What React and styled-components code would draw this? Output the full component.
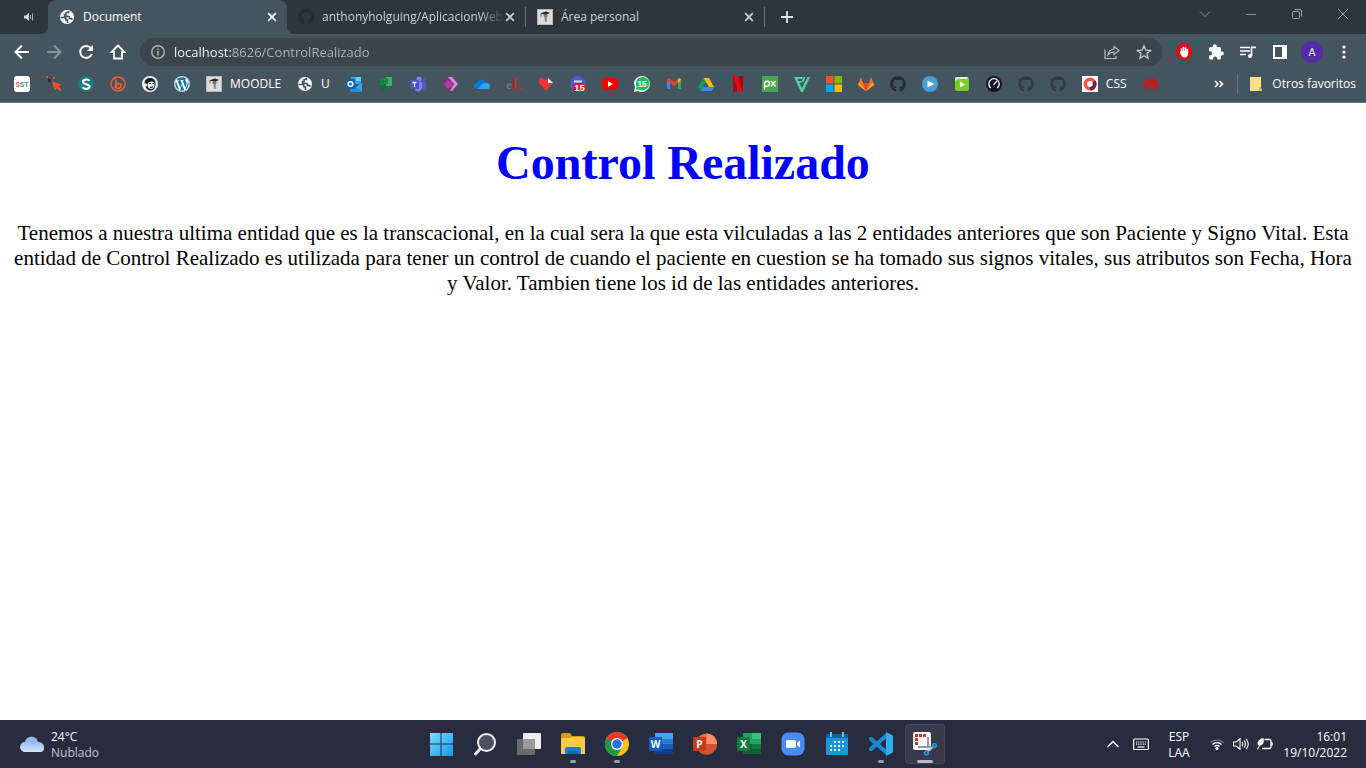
import React from "react";
import styled, { createGlobalStyle } from "styled-components";
import { FaGithub, FaWordpress, FaMailchimp } from "react-icons/fa";
import { SiHuawei } from "react-icons/si";

const Global = createGlobalStyle`
  *, *::before, *::after { box-sizing: border-box; }
  body { margin: 0; background: #fff; }
  button, input { font: inherit; color: inherit; border: 0; padding: 0; background: none; }
  a { color: inherit; text-decoration: none; }
`;

const ui = `"Open Sans", "Noto Sans", sans-serif`;

const Shell = styled.div`
  display: flex;
  flex-direction: column;
  min-height: 100vh;
`;

const Browser = styled.header`
  font: 12px/16px ${ui};
  color: #fff;
  background: #45555f;
  border-bottom: 1px solid #6d7a82;
`;

const TabStrip = styled.div`
  display: flex;
  height: 34px;
  background: #2c363c;
`;

const PinnedTab = styled.button`
  display: grid;
  place-items: center;
  width: 48px;
  padding-left: 8px;
`;

const Tab = styled.div`
  position: relative;
  display: flex;
  align-items: center;
  width: ${(p) => (p.$active ? 239 : 238)}px;
  min-width: 0;
  padding: 0 9px 0 11px;
  color: ${(p) => (p.$active ? "#fff" : "#cdd1d4")};
  background: ${(p) => (p.$active ? "#45555f" : "transparent")};
  border-radius: 8px 8px 0 0;

  ${(p) =>
    p.$active &&
    `&::before, &::after {
      content: "";
      position: absolute;
      bottom: 0;
      width: 8px;
      height: 8px;
    }
    &::before { right: 100%; background: radial-gradient(circle at 0 0, transparent 8px, #45555f 8px); }
    &::after { left: 100%; background: radial-gradient(circle at 100% 0, transparent 8px, #45555f 8px); }`}
`;

const TabTitle = styled.a`
  flex: 1;
  margin-left: 8px;
  overflow: hidden;
  white-space: nowrap;
  ${(p) => p.$fade && "mask-image: linear-gradient(to right, #000 86%, transparent);"}
`;

const TabDivider = styled.span`
  align-self: center;
  width: 1px;
  height: 20px;
  background: #67737a;
`;

const SmallButton = styled.button`
  display: grid;
  place-items: center;
  width: 16px;
  height: 16px;
`;

const CloseTab = styled(SmallButton)`
  width: 12px;
`;

const NewTab = styled(SmallButton)`
  align-self: center;
  margin-left: 14px;
`;

const WindowButtons = styled.div`
  display: flex;
  margin-left: auto;
`;

const WindowButton = styled.button`
  display: grid;
  place-items: center;
  width: 46px;
  height: 28px;
`;

const Toolbar = styled.div`
  display: flex;
  align-items: center;
  height: 36px;
  padding: 0 6px;
`;

const ToolButton = styled.button`
  display: grid;
  place-items: center;
  width: 32px;
  height: 28px;
`;

const Omnibox = styled.label`
  display: flex;
  align-items: center;
  flex: 1;
  height: 28px;
  margin: 0 6px;
  padding: 0 2px 0 10px;
  border-radius: 14px;
  background: #3a454c;
`;

const Address = styled.input`
  flex: 1;
  min-width: 0;
  margin-left: 8px;
  font-size: 13px;
  line-height: 20px;
  outline: 0;
  color: transparent;
  background: linear-gradient(to right, #fff 57px, #b0b6ba 57px);
  background-clip: text;
`;

const Avatar = styled.span`
  display: grid;
  place-items: center;
  width: 22px;
  height: 22px;
  border-radius: 50%;
  background: #512da8;
  font-size: 11px;
`;

const Bookmarks = styled.nav`
  display: flex;
  align-items: center;
  gap: 16px;
  height: 32px;
  padding: 0 10px 4px 14px;
`;

const Bookmark = styled.a`
  display: flex;
  align-items: center;
  gap: 8px;
  white-space: nowrap;

  svg { flex: none; }
`;

const Overflow = styled.div`
  display: flex;
  align-items: center;
  gap: 10px;
  margin-left: auto;
`;

const Page = styled.main`
  flex: 1;
  padding: 0 8px;
  text-align: center;
  font-family: "Liberation Serif", "Times New Roman", serif;
  color: #000;
  background: #fff;
`;

const Title = styled.h1`
  margin: 32px 0 30px;
  font-size: 48px;
  line-height: 56px;
  color: #00f;
`;

const Text = styled.p`
  margin: 0;
  font-size: 21px;
  line-height: 25px;
`;

const Taskbar = styled.footer`
  display: grid;
  grid-template-columns: 1fr auto 1fr;
  align-items: center;
  height: 48px;
  font: 12px/16px ${ui};
  color: #fff;
  background: #282c3f;
`;

const Weather = styled.button`
  display: flex;
  align-items: center;
  gap: 7px;
  justify-self: start;
  padding-left: 20px;
  text-align: left;
`;

const Muted = styled.span`
  color: #c3c6cd;
`;

const Stack = styled.span`
  display: flex;
  flex-direction: column;
  padding-top: 2px;
`;

const Apps = styled.div`
  display: flex;
`;

const AppButton = styled.button`
  position: relative;
  display: grid;
  place-items: center;
  width: 40px;
  height: 40px;
  margin: 0 2px;
  border-radius: 4px;
  background: ${(p) => (p.$focused ? "#363a4b" : "transparent")};
  box-shadow: ${(p) => (p.$focused ? "inset 0 0 0 1px #414556" : "none")};

  &::after {
    content: "";
    position: absolute;
    bottom: 1px;
    left: 50%;
    width: ${(p) => (p.$focused ? 16 : p.$open ? 6 : 0)}px;
    height: 3px;
    border-radius: 2px;
    transform: translateX(-50%);
    background: ${(p) => (p.$focused ? "#b4bcc4" : "#9b9da8")};
  }
`;

const Tray = styled.div`
  display: flex;
  align-items: center;
  justify-self: end;
  padding-right: 19px;
`;

const TrayButton = styled.button`
  display: grid;
  place-items: center;
  width: ${(p) => p.$w}px;
  height: 40px;
`;

const Clock = styled.button`
  width: 66px;
  text-align: right;
`;

const Svg = ({ s = 16, w, h, v, children }) => (
  <svg width={w || s} height={h || s} viewBox={v || `0 0 ${w || s} ${h || s}`} fill="none" aria-hidden="true">
    {children}
  </svg>
);

const Globe = () => (
  <Svg>
    <circle cx="8" cy="8" r="7" fill="#fff" />
    <path d="M1.500 8.500H5a2 2 0 0 1 2 2v.5h1.500V14M9.500 2v1.500H7V5.500H5.500v1.800H9a1.500 1.500 0 0 1 1.500 1.500v.7H12l1.500 1.200" stroke="#45555f" strokeWidth="1.700" strokeLinejoin="round" />
  </Svg>
);
const Moodle = () => (
  <Svg>
    <rect width="16" height="16" fill="#b9b9b9" />
    <rect x="1" y="1" width="14" height="14" fill="#dcdcdc" />
    <path d="m3 4.500 6-2 4 1.500-4 1.700z" fill="#222" />
    <path d="M6 5.500c1.500 1 3 1 5 .3L10 8.500 9.500 13H8L7.600 9z" fill="#8a8a8a" />
    <path d="M4 5v2.500M7.500 6.500c1 1 2 .6 2.600 0" stroke="#444" strokeWidth=".8" />
  </Svg>
);
const Close = ({ c = "#fff" }) => (
  <Svg s={12}>
    <path d="m2.200 2.200 7.600 7.600m0-7.600-7.600 7.600" stroke={c} strokeWidth="1.700" />
  </Svg>
);

const GithubMark = ({ c = "#242c34" }) => <FaGithub size={16} color={c} />;

const bookmarks = [
  ["SST", <Svg key="i"><rect width="16" height="16" rx="3" fill="#fff" /><text x="1.500" y="10.500" fontSize="7" fontWeight="700" fontFamily="Roboto, sans-serif"><tspan fill="#e05a62">S</tspan><tspan fill="#4a77b8">S</tspan><tspan fill="#43a373">T</tspan></text></Svg>],
  ["Clic", <Svg key="i"><path d="m6 5 9.800 4-3.400 1.200 3.200 3.600-1.400 1.500-3.600-3.400-1.800 3.200z" fill="#f4511e" /><path d="M2 3h3v3H2z" fill="#2d2d33" /><path d="M0 0h2v2H0zM7 1h2v2H7z" fill="#e5502b" /><path d="M4 1h2v2H4zM0 5h1v2H0z" fill="#753e35" /></Svg>],
  ["Scribd", <Svg key="i"><circle cx="8" cy="8" r="8" fill="#1a7b80" /><path d="M11.500 4.700C9.800 2.800 5 3.200 5 5.800c0 3 6.500 1.800 6.500 4.800 0 2.700-5.200 3-7 .6" stroke="#fff" strokeWidth="2.200" /></Svg>],
  ["Bitly", <Svg key="i"><circle cx="8" cy="8" r="7" stroke="#e9612f" strokeWidth="1.500" /><path d="M5.200 3.200c1.500 2 1 5-.2 9.200" stroke="#e9612f" strokeWidth="1.700" /><circle cx="8.400" cy="9.800" r="2.500" stroke="#e9612f" strokeWidth="1.700" /></Svg>],
  ["Mailchimp", <Svg key="i"><circle cx="8" cy="8" r="8" fill="#e8f1ef" /><path d="M3 9C1.500 4 5 1.500 9 2c4 .5 5 4 4.500 7.500-.5 3-2.500 5-5 5S4 12.500 3.500 10.500z" fill="#12201e" /><path d="M6 7c2-2 5-2 6.500 0 .5 3-.5 6-3.500 6s-4-3-3-6z" fill="#e8f1ef" /><circle cx="3.500" cy="9" r="1.800" fill="#e8f1ef" /><path d="M7.300 7.500h1.500M10.500 7.500H12M8 11c1 .8 2.300.6 3-.3" stroke="#12201e" strokeWidth="1.100" /></Svg>],
  ["WordPress", <Svg key="i"><circle cx="8" cy="8" r="8" fill="#fff" /><FaWordpress size={16} color="#1373a5" /></Svg>],
  ["Moodle", <Moodle key="i" />, "MOODLE"],
  ["U", <Globe key="i" />, "U"],
  ["Outlook", <Svg key="i"><path d="M5 1h10v7H5z" fill="#28a8ea" /><path d="M10 1h5v4h-5z" fill="#50d9ff" /><path d="m4 7 6 4 6-4v9H4z" fill="#1490df" /><path d="m10 11 6-4v9z" fill="#32a9e7" /><rect y="3" width="9" height="10" rx="1" fill="#0a64b5" /><circle cx="4.500" cy="8" r="2.300" stroke="#fff" strokeWidth="1.600" /></Svg>],
  ["Planner", <Svg key="i"><path d="M2 2h6v12H2z" fill="#107035" /><path d="M8 1h6v9H8z" fill="#31b468" /><path d="M6 2h4v6H6z" fill="#21894a" /><path d="M2 2h4v7H2z" fill="#0e8740" /></Svg>],
  ["Teams", <Svg key="i"><circle cx="9" cy="3" r="2.600" fill="#7b83eb" /><circle cx="14" cy="4" r="1.600" fill="#5059c9" /><path d="M11 6h5v5c0 2-2 3-4 2z" fill="#5059c9" /><path d="M5 6h7v6a4 4 0 0 1-7 2z" fill="#7b83eb" /><rect y="4" width="9" height="9" rx="1" fill="#4b53bc" /><path d="M2.500 6.500h4M4.500 6.500V11" stroke="#fff" strokeWidth="1.300" /></Svg>],
  ["Power Apps", <Svg key="i"><path d="M6 1h3l4 4-2 8-3 2L0 8z" fill="#8d2b83" /><path d="M6 1h4l6 7-6 7H8l4-7z" fill="#dd86d5" /><path d="m6 4 5 4-5 5-4-5z" fill="#ae3ca4" /></Svg>],
  ["OneDrive", <Svg key="i"><path d="M3 13a3 3 0 0 1 0-6c1-4 6-5 8-1 3 0 5 1 5 4s-1 3-4 3H4z" fill="#0d78d1" /><path d="M8 8c3-2 8-1 8 2 0 2-1 3-4 3H4z" fill="#28a8ea" /></Svg>],
  ["eLibro", <Svg key="i"><text x="0" y="13" fontSize="13" fontWeight="700" fontFamily="Liberation Serif, serif" fill="#7b7476">e<tspan fill="#cf2029" fontSize="16">L</tspan></text></Svg>],
  ["Genially", <Svg key="i"><path d="M8 15 1 7c-2-4 3-7 6-4l1 1 2-1v4h5z" fill="#ee3431" /><path d="m10 2 5 5h-5z" fill="#fff" /></Svg>],
  ["Mensajes", <Svg key="i"><circle cx="8" cy="8" r="8" fill="#5059c9" /><path d="M4 5.500h8" stroke="#dfe2ff" strokeWidth="2" /><rect x="3" y="7" width="13" height="9" rx="4.500" fill="#d7191f" /><text x="4.200" y="15" fontSize="9.500" fontWeight="700" fontFamily="Liberation Sans, sans-serif" fill="#fff">15</text></Svg>],
  ["YouTube", <Svg key="i"><rect y="2" width="16" height="12" rx="3" fill="#f00" /><path d="m6 5 5 3-5 3z" fill="#fff" /></Svg>],
  ["WhatsApp", <Svg key="i"><path d="M0 16 1 11C-2 5 3 0 8 0a8 8 0 1 1-4 15z" fill="#fff" /><path d="m2 14 .7-3A6.700 6.700 0 1 1 5 13.400z" fill="#20c15a" /><text x="3.400" y="11" fontSize="8.500" fontWeight="700" fontFamily="Liberation Sans, sans-serif" fill="#fff">15</text></Svg>],
  ["Gmail", <Svg key="i"><path d="M1 4v9h3V6z" fill="#4285f4" /><path d="M15 4v9h-3V6z" fill="#34a853" /><path d="M1 4c0-2 2-2 3-1l4 3 4-3v4l-4 3-4-3-3-2z" fill="#ea4335" /><path d="M12 3c2-2 3 0 3 1l-3 3z" fill="#fbbc04" /></Svg>],
  ["Drive", <Svg key="i"><path d="M5.500 2 0 11l2.500 4L8 6z" fill="#109d58" /><path d="M5.500 2H11l5 9h-5z" fill="#fbbc04" /><path d="M5 11h11l-2.500 4h-11z" fill="#4285f4" /></Svg>],
  ["Netflix", <Svg key="i"><path d="M3 0h4v16H3zM9 0h4v16H9z" fill="#a90913" /><path d="M3 0h4l6 16H9z" fill="#e50914" /></Svg>],
  ["Pixabay", <Svg key="i"><rect width="16" height="16" fill="#48a84b" /><path d="M2.500 13.500V7.500a2.500 2.500 0 1 1 2.500 2.700H3M9 5l4.500 5.500M13.500 5 9 10.500" stroke="#fff" strokeWidth="1.400" /></Svg>],
  ["Filmora", <Svg key="i"><path d="M0 1h9L8 3H3.500l1 2H8L7 7H5.500L8 12l5.500-11H16L9 16H7z" fill="#50d2a0" /><path d="M10.500 1 8.500 6" stroke="#50d2a0" strokeWidth="2" /></Svg>],
  ["Microsoft", <Svg key="i"><path d="M0 0h7.500v7.500H0z" fill="#f25022" /><path d="M8.500 0H16v7.500H8.500z" fill="#7fba00" /><path d="M0 8.500h7.500V16H0z" fill="#00a4ef" /><path d="M8.500 8.500H16V16H8.500z" fill="#ffb900" /></Svg>],
  ["GitLab", <Svg key="i"><path d="M8 15 0 9l3-8 2 6h6l2-6 3 8z" fill="#fc6d26" /><path d="M8 15 5 7h6z" fill="#e24329" /><path d="m8 15-8-6 1-3zM8 15l8-6-1-3z" fill="#fca326" /></Svg>],
  ["GitHub", <GithubMark key="i" />],
  ["Reproductor", <Svg key="i"><circle cx="8" cy="8" r="8" fill="#4b9fd8" /><path d="m5.500 4.500 7 3.500-7 3.500z" fill="#fff" /></Svg>],
  ["Video", <Svg key="i"><rect x="1" y="1" width="14" height="14" rx="2" fill="#79ce26" /><path d="M1 3q0-2 2-2h11L13 3H4L1 5z" fill="#eefae4" /><path d="m6 5.500 5 3-5 3z" fill="#fff" /></Svg>],
  ["Velocidad", <Svg key="i"><circle cx="8" cy="8" r="8" fill="#141526" /><path d="M4.800 12a5.200 5.200 0 1 1 6.400 0M7.500 8.700 11 5" stroke="#fff" strokeWidth="1.300" /></Svg>],
  ["GitHub 2", <GithubMark key="i" c="#303c44" />],
  ["GitHub 3", <GithubMark key="i" c="#303c44" />],
  ["CSS", <Svg key="i"><rect width="16" height="16" fill="#fff" /><circle cx="8" cy="8" r="4.700" stroke="#f4573d" strokeWidth="3.600" /><path d="M8 12.700A4.700 4.700 0 0 0 12 5.500" stroke="#6b2350" strokeWidth="3.600" /></Svg>, "CSS"],
  ["Huawei", <SiHuawei key="i" size={16} color="#d80f1b" />],
];

const Office = ({ letter, dark, children }) => (
  <Svg s={24}>
    {children}
    <rect y="5" width="13" height="14" rx="1" fill={dark} />
    <text x="6.500" y="15.500" textAnchor="middle" fontSize="10" fontWeight="700" fontFamily="Open Sans, sans-serif" fill="#fff">{letter}</text>
  </Svg>
);

const apps = [
  ["Inicio", <Svg key="i" s={24}><defs><linearGradient id="win" x1="0" y1="0" x2="24" y2="24" gradientUnits="userSpaceOnUse"><stop stopColor="#7fe0ff" /><stop offset="1" stopColor="#109af3" /></linearGradient></defs><path d="M1 1h10.500v10.500H1zM12.500 1H24v10.500H12.500zM1 12.500h10.500V24H1zM12.500 12.500H24V24H12.500z" fill="url(#win)" /></Svg>],
  ["Buscar", <Svg key="i" s={24}><path d="m8 16-5.500 6" stroke="#e4e6ea" strokeWidth="3" strokeLinecap="round" /><circle cx="13.500" cy="10.500" r="8.500" fill="#4c5161" stroke="#eef0f2" strokeWidth="2" /></Svg>],
  ["Vista de tareas", <Svg key="i" s={24}><rect x="6" y="1" width="18" height="16" rx="1" fill="#eee" /><rect y="7" width="18" height="16" rx="1" fill="#696969" /><path d="M6 7h12v10H6z" fill="#9a9a9a" /></Svg>],
  ["Explorador", <Svg key="i" s={24}><path d="M0 3q0-2 2-2h7l2 3h11q2 0 2 2v14H0z" fill="#d89a12" /><path d="M0 6h9l2-1h11q2 0 2 2v15H0z" fill="#fdcb46" /><path d="M4 22v-5q0-2 2-2h12q2 0 2 2v5z" fill="#1681d2" /><path d="M7 19h10v3H7z" fill="#0b68b4" /></Svg>, true],
  ["Chrome", <Svg key="i" s={24}><circle cx="12" cy="12" r="12" fill="#fbc116" /><path d="M12 12 1.600 6a12 12 0 0 1 20.800 0z" fill="#e33b2e" /><path d="M12 12 1.600 6A12 12 0 0 0 12 24l5.200-9z" fill="#229847" /><path d="M12 6h10.400L12 12 1.600 6" fill="#e33b2e" /><circle cx="12" cy="12" r="6" fill="#fff" /><circle cx="12" cy="12" r="4.700" fill="#2274e5" /></Svg>, true],
  ["Word", <Office key="i" letter="W" dark="#185abd"><path d="M6 1h18v6H6z" fill="#41a5ee" /><path d="M6 7h18v5H6z" fill="#2b7cd3" /><path d="M6 12h18v5H6z" fill="#185abd" /><path d="M6 17h18v5H6z" fill="#103f91" /></Office>],
  ["PowerPoint", <Office key="i" letter="P" dark="#c43e1c"><circle cx="13.500" cy="12" r="10.500" fill="#ed6c47" /><path d="M13.500 1.500A10.500 10.500 0 0 1 24 12H13.500z" fill="#ff8f6b" /><path d="M3 12h21a10.500 10.500 0 0 1-21 0z" fill="#d35230" /></Office>],
  ["Excel", <Office key="i" letter="X" dark="#107c41"><path d="M6 1h9v11H6z" fill="#21a366" /><path d="M15 1h9v6h-9z" fill="#33c481" /><path d="M15 7h9v5h-9z" fill="#21a366" /><path d="M6 12h18v10H6z" fill="#185c37" /><path d="M15 12h9v5h-9z" fill="#107c41" /></Office>],
  ["Zoom", <Svg key="i" s={24}><rect x=".5" y=".5" width="23" height="23" rx="7" fill="#4a8cf7" /><rect x="5" y="8" width="10" height="8" rx="2" fill="#fff" /><path d="m16 11 3-2.500v7L16 13z" fill="#fff" /></Svg>],
  ["Calendario", <Svg key="i" s={24}><rect x="1" y="2" width="22" height="21" rx="1" fill="#1998d9" /><path d="M1 2h22v4H1z" fill="#0c62a7" /><path d="M5 0h2v5H5zM17 0h2v5h-2z" fill="#65c7f1" /><path d="M9 10h10M5 14h14M5 18h10" stroke="#fff" strokeWidth="2" strokeDasharray="2 2" /></Svg>],
  ["Visual Studio Code", <Svg key="i" s={24}><path d="m2 7 16 14M2 17 18 3" stroke="#168bd1" strokeWidth="4" strokeLinecap="round" /><path d="m17 0 6 3q1 .5 1 2v14q0 1.500-1 2l-6 3z" fill="#31adf2" /></Svg>, true],
  ["Recortes", <Svg key="i" s={24}><rect width="18" height="18" rx="2" fill="#fafafa" /><path d="M3.500 13V3.500H14" stroke="#d13b20" strokeWidth="3" strokeDasharray="3 1" /><path d="M5 15h13M15 5v11" stroke="#8e9aa2" strokeWidth="2" /><path d="m14 20 7-6" stroke="#c5ccd1" strokeWidth="2" /><circle cx="13.500" cy="21" r="1.800" stroke="#1f9be0" strokeWidth="1.700" /><circle cx="21.500" cy="13.500" r="1.800" stroke="#1f9be0" strokeWidth="1.700" /></Svg>, true, true],
];

export default function App() {
  return (
    <Shell>
      <Global />
      <Browser>
        <TabStrip>
          <PinnedTab aria-label="Pestaña con audio">
            <Svg><path d="M4 6.500h2L9 4v8L6 9.500H4z" fill="#d5d9dc" /><path d="M10.500 6v4M12.500 4.500v7" stroke="#abb2b6" /></Svg>
          </PinnedTab>
          <Tab $active>
            <Globe />
            <TabTitle href="#document">Document</TabTitle>
            <CloseTab aria-label="Cerrar"><Close /></CloseTab>
          </Tab>
          <Tab>
            <GithubMark />
            <TabTitle href="#github" $fade>anthonyholguing/AplicacionWeb</TabTitle>
            <CloseTab aria-label="Cerrar"><Close c="#cdd1d4" /></CloseTab>
          </Tab>
          <TabDivider />
          <Tab>
            <Moodle />
            <TabTitle href="#area">Área personal</TabTitle>
            <CloseTab aria-label="Cerrar"><Close c="#cdd1d4" /></CloseTab>
          </Tab>
          <TabDivider />
          <NewTab aria-label="Nueva pestaña">
            <Svg><path d="M8 2v12M2 8h12" stroke="#dfe2e4" strokeWidth="1.800" /></Svg>
          </NewTab>
          <WindowButtons>
            <WindowButton aria-label="Buscar pestañas"><Svg><path d="m3 5.500 5 5 5-5" stroke="#879096" /></Svg></WindowButton>
            <WindowButton aria-label="Minimizar"><Svg><path d="M3 8.500h10" stroke="#879096" /></Svg></WindowButton>
            <WindowButton aria-label="Restaurar"><Svg><rect x="3.500" y="5.500" width="7" height="7" rx="1" stroke="#a0a7ab" /><path d="M5.500 3.500H11a1.500 1.500 0 0 1 1.500 1.500v5.500" stroke="#a0a7ab" /></Svg></WindowButton>
            <WindowButton aria-label="Cerrar ventana"><Svg><path d="m3 3 10 10M13 3 3 13" stroke="#9aa2a7" /></Svg></WindowButton>
          </WindowButtons>
        </TabStrip>
        <Toolbar>
          <ToolButton aria-label="Atrás"><Svg><path d="M15 8H2M8 1.500 1.500 8 8 14.500" stroke="#fff" strokeWidth="2" /></Svg></ToolButton>
          <ToolButton aria-label="Adelante"><Svg><path d="M1 8h13M8 1.500 14.500 8 8 14.500" stroke="#87939a" strokeWidth="2" /></Svg></ToolButton>
          <ToolButton aria-label="Recargar"><Svg><path d="M13 4.300A6 6 0 1 0 13.800 10" stroke="#fff" strokeWidth="2" /><path d="M15 1v6H9z" fill="#fff" /></Svg></ToolButton>
          <ToolButton aria-label="Inicio"><Svg><path d="M8 1.500 1.500 8H4v6.500h8V8h2.500z" stroke="#fff" strokeWidth="1.800" /></Svg></ToolButton>
          <Omnibox>
            <Svg><circle cx="8" cy="8" r="6.300" stroke="#b0b6ba" strokeWidth="1.400" /><path d="M8 7v4.500M8 4.500v1.500" stroke="#b0b6ba" strokeWidth="1.500" /></Svg>
            <Address aria-label="Dirección" defaultValue="localhost:8626/ControlRealizado" />
            <ToolButton aria-label="Compartir"><Svg><path d="M1 5.500v9h11V12" stroke="#b8bec1" strokeWidth="1.200" /><path d="M10 2.500 15 6.500l-5 4V8C7 8 5.500 9 4 11c.3-3.500 2.500-5.500 6-6z" stroke="#b8bec1" strokeWidth="1.200" /></Svg></ToolButton>
            <ToolButton aria-label="Añadir a favoritos"><Svg><path d="m8 1.700 1.800 4.400 4.800.4-3.700 3.100 1.200 4.700L8 11.800l-4.100 2.500 1.200-4.700-3.700-3.100 4.800-.4z" stroke="#c4c9cc" strokeWidth="1.300" /></Svg></ToolButton>
          </Omnibox>
          <ToolButton aria-label="Bloqueador"><Svg><path d="M5 0h6l5 5v6l-5 5H5l-5-5V5z" fill="#d80d13" /><path d="M5.500 9V5M7.500 8V3.500M9.500 8V4M11.300 8V5.500" stroke="#fff" strokeWidth="1.600" strokeLinecap="round" /><path d="M4.700 7h7.400v3a3.500 3.500 0 0 1-6 2.500L4 9z" fill="#fff" /></Svg></ToolButton>
          <ToolButton aria-label="Extensiones"><Svg><path d="M13.800 7.500H13V4.500c0-.8-.7-1.500-1.500-1.500H8.800v-.7a2 2 0 0 0-4 0V3H2.500C1.700 3 1 3.700 1 4.500v2.800h1a2 2 0 0 1 0 4.200H1v2.500c0 .8.700 1.500 1.500 1.500h2.700v-1a2 2 0 0 1 4 0v1h2.300c.8 0 1.500-.7 1.500-1.500v-2.500h.8a2 2 0 0 0 0-4z" fill="#fff" /></Svg></ToolButton>
          <ToolButton aria-label="Contenido multimedia"><Svg><path d="M0 3.500h10M0 7h10M0 10.500h6" stroke="#fff" strokeWidth="1.700" /><circle cx="10" cy="12" r="2" fill="#fff" /><path d="M11.500 12V3.300H16" stroke="#fff" strokeWidth="1.700" /></Svg></ToolButton>
          <ToolButton aria-label="Panel lateral"><Svg><path d="M1 1h14v14H1z" fill="#fff" /><path d="M3 3h7v10H3z" fill="#45555f" /></Svg></ToolButton>
          <ToolButton aria-label="Perfil"><Avatar>A</Avatar></ToolButton>
          <ToolButton aria-label="Menú"><Svg><circle cx="8" cy="3" r="1.600" fill="#fff" /><circle cx="8" cy="8" r="1.600" fill="#fff" /><circle cx="8" cy="13" r="1.600" fill="#fff" /></Svg></ToolButton>
        </Toolbar>
        <Bookmarks aria-label="Favoritos">
          {bookmarks.map(([name, icon, label]) => (
            <Bookmark key={name} href="#favorito" aria-label={name}>{icon}{label}</Bookmark>
          ))}
          <Overflow>
            <SmallButton aria-label="Más favoritos"><Svg><path d="m4 5 3 3-3 3M8.500 5l3 3-3 3" stroke="#fff" strokeWidth="1.600" /></Svg></SmallButton>
            <TabDivider as="i" />
            <Bookmark href="#otros">
              <Svg><path d="M2 1h11v11l1 3H2z" fill="#fbe08b" /><path d="M11 11h2v4h-2z" fill="#e3b94e" /></Svg>
              Otros favoritos
            </Bookmark>
          </Overflow>
        </Bookmarks>
      </Browser>
      <Page>
        <Title>Control Realizado</Title>
        <Text>
          Tenemos a nuestra ultima entidad que es la transcacional, en la cual sera la que esta vilculadas a las 2
          entidades anteriores que son Paciente y Signo Vital. Esta entidad de Control Realizado es utilizada para
          tener un control de cuando el paciente en cuestion se ha tomado sus signos vitales, sus atributos son Fecha,
          Hora y Valor. Tambien tiene los id de las entidades anteriores.
        </Text>
      </Page>
      <Taskbar>
        <Weather>
          <Svg s={24}><defs><linearGradient id="cloud" x1="0" y1="4" x2="0" y2="20" gradientUnits="userSpaceOnUse"><stop stopColor="#7da7e8" /><stop offset="1" stopColor="#d3e3fb" /></linearGradient></defs><path d="M5 20a5 5 0 0 1 0-10c1-7 12-7 13 0 8 0 8 10 1 10z" fill="#93b5ec" /><path d="M5 20a5 5 0 0 1 1-10c4-1 6 1 7 3 2-4 11-3 11 3 0 3-2 4-4 4z" fill="url(#cloud)" /></Svg>
          <Stack><span>24°C</span><Muted>Nublado</Muted></Stack>
        </Weather>
        <Apps>
          {apps.map(([name, icon, open, focused]) => (
            <AppButton key={name} aria-label={name} $open={open} $focused={focused}>{icon}</AppButton>
          ))}
        </Apps>
        <Tray>
          <TrayButton $w={24} aria-label="Iconos ocultos"><Svg><path d="m2.500 11 5.500-5.500 5.500 5.500" stroke="#fff" strokeWidth="1.300" /></Svg></TrayButton>
          <TrayButton $w={32} aria-label="Teclado"><Svg><rect x=".6" y="3" width="14.800" height="10.500" rx="1" stroke="#fff" strokeWidth="1.200" /><path d="M3 6h10M3 8.200h10" stroke="#fff" strokeWidth="1.200" strokeDasharray="1.200 1" /><path d="M4.500 11h7" stroke="#fff" strokeWidth="1.200" /></Svg></TrayButton>
          <TrayButton $w={44}><Stack><span>ESP</span><span>LAA</span></Stack></TrayButton>
          <TrayButton $w={32} aria-label="Wi-Fi"><Svg><path d="M1.500 6.500a9.200 9.200 0 0 1 13 0" stroke="#767986" strokeWidth="1.300" /><path d="M3.500 8.500a6.400 6.400 0 0 1 9 0M5.500 10.600a3.500 3.500 0 0 1 5 0" stroke="#fff" strokeWidth="1.400" /><circle cx="8" cy="12.500" r="1.500" fill="#fff" /></Svg></TrayButton>
          <TrayButton $w={16} aria-label="Volumen"><Svg><path d="M.6 6h2.600L7 2.800v10.400L3.200 10H.6zM9 6c1 1 1 3 0 4M11 4.300c2 2 2 5.400 0 7.400M13 2.800c3 3 3 7.400 0 10.400" stroke="#fff" strokeWidth="1.100" /></Svg></TrayButton>
          <TrayButton $w={32} aria-label="Batería"><Svg><path d="M7.500 3.500H12q2 0 2 2v5q0 2-2 2H5" stroke="#fff" strokeWidth="1.300" /><path d="M15 6.500v3" stroke="#fff" strokeWidth="1.600" /><path d="m0 13 2-3.500C-1 8 1 3 6.500 2c1 5-.5 7-3.500 7.500L1 13.500z" fill="#fff" /></Svg></TrayButton>
          <Clock><Stack><span>16:01</span><span>19/10/2022</span></Stack></Clock>
        </Tray>
      </Taskbar>
    </Shell>
  );
}
